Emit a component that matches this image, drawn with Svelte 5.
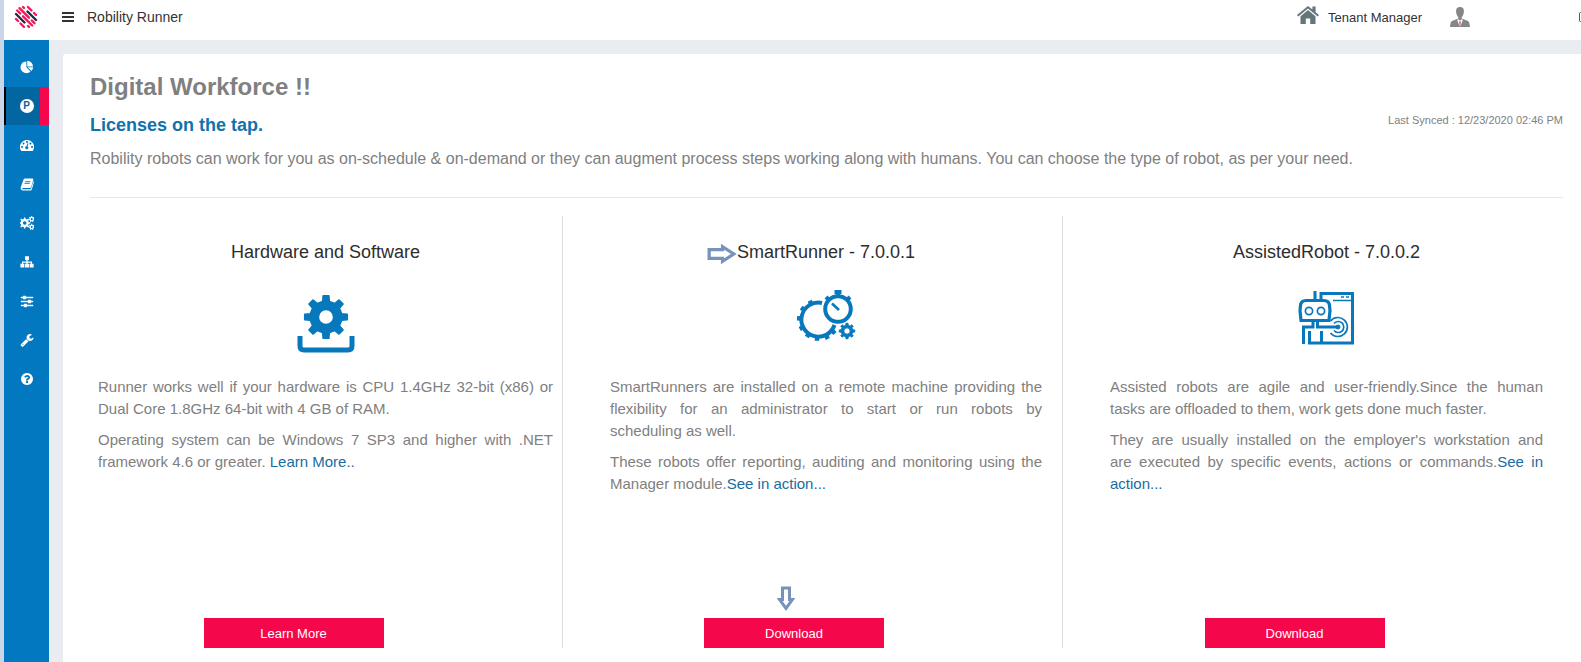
<script lang="ts">
  type Part = { text: string; link?: boolean }
  type Runner = {
    title: string
    icon: string
    action: string
    marked?: boolean
    paragraphs: Part[][]
  }

  const menu = ["Dashboard", "Packages", "Monitor", "Library", "Processes", "Hierarchy", "Settings", "Tools", "Help"]
  let active = $state("Packages")

  const runners: Runner[] = [
    {
      title: "Hardware and Software",
      icon: "hardware",
      action: "Learn More",
      paragraphs: [
        [{ text: "Runner works well if your hardware is CPU 1.4GHz 32-bit (x86) or Dual Core 1.8GHz 64-bit with 4 GB of RAM." }],
        [
          { text: "Operating system can be Windows 7 SP3 and higher with .NET framework 4.6 or greater. " },
          { text: "Learn More..", link: true },
        ],
      ],
    },
    {
      title: "SmartRunner - 7.0.0.1",
      icon: "smart",
      action: "Download",
      marked: true,
      paragraphs: [
        [{ text: "SmartRunners are installed on a remote machine providing the flexibility for an administrator to start or run robots by scheduling\u00a0as well." }],
        [
          { text: "These robots offer reporting, auditing and monitoring using the Manager module." },
          { text: "See in action...", link: true },
        ],
      ],
    },
    {
      title: "AssistedRobot - 7.0.0.2",
      icon: "assisted",
      action: "Download",
      paragraphs: [
        [{ text: "Assisted robots are agile and user-friendly.Since the human tasks are offloaded to them, work gets done much faster." }],
        [
          { text: "They are usually installed on the employer's workstation and are\u00a0executed by specific events, actions or commands." },
          { text: "See in action...", link: true },
        ],
      ],
    },
  ]

  // Outline of a gear: body radius r, teeth up to radius R, round hole
  function gear(cx: number, cy: number, r: number, R: number, teeth: number, hole: number) {
    const step = (Math.PI * 2) / teeth
    const at = (rad: number, a: number) => `${(cx + rad * Math.sin(a)).toFixed(2)} ${(cy - rad * Math.cos(a)).toFixed(2)}`
    let d = ""
    for (let i = 0; i < teeth; i++) {
      const a = i * step
      d += `${i ? "L" : "M"}${at(r, a - step * 0.27)}L${at(R, a - step * 0.17)}L${at(R, a + step * 0.17)}L${at(r, a + step * 0.27)}`
    }
    return `${d}ZM${cx - hole} ${cy}a${hole} ${hole} 0 1 0 ${hole * 2} 0a${hole} ${hole} 0 1 0 ${-hole * 2} 0Z`
  }
</script>

<div class="app">
  <header>
    <svg class="logo" viewBox="0 0 24 24" fill="none" stroke-width="2.400" stroke-linecap="round">
      <path stroke="#ee1c55" d="M14 2l3.500 3.500M20 8l2 2M9 2l1 1M5.500 3.200l9.500 9.500M17.800 15.500l2.700 2.700M3.200 5.500l3 3M9 11.300l9.200 9.200M14 21l1 1M2 14l2 2M6.500 18.500l3.500 3.500" />
      <path stroke="#1c2b50" d="M13.500 6.500l8.500 8.500M2 9l8.500 8.500" />
    </svg>
    <button class="toggle" aria-label="Toggle menu">
      <svg viewBox="0 0 12 12" fill="#333"><path d="M0 1h12v2H0zM0 5h12v2H0zM0 9h12v2H0z" /></svg>
    </button>
    <span class="brand">Robility Runner</span>
    <a class="tenant" href="#tenant">
      <svg viewBox="0 0 22 18" fill="#66757b">
        <path d="M11 0 0 9l1.300 1.500L11 2.600l9.700 7.900L22 9l-3.400-2.800V.6h-3.200v3z" />
        <path d="M11 4 3.500 10.200V18h5.300v-5.500h4.400V18h5.300v-7.800z" />
      </svg>
      Tenant Manager
    </a>
    <button class="user" aria-label="Account">
      <svg viewBox="0 0 20 22">
        <path fill="#85868a" d="M10 1c2.900 0 4.200 2 3.900 4.800-.2 2.800-1.100 4.300-2.200 5.200v1.500l5.600 2.200c1.600.7 2.200 1.500 2.700 6.300H0c.5-4.800 1-5.600 2.700-6.300l5.600-2.200V11C7.200 10.100 6.300 8.600 6.100 5.800 5.800 3 7.100 1 10 1z" />
        <path fill="#fff" d="M8 13.200 10 14.500l2-1.300.8.800L10.500 20h-1L7.200 14z" />
        <path fill="#c98b74" d="m10 14.500 1 1.300-.6 5.200h-.8L9 15.800z" />
      </svg>
    </button>
    <button class="more" aria-label="Sign out">
      <svg viewBox="0 0 12 12" fill="none" stroke="#555"><path d="M7 1.500H2.500q-1 0-1 1v7q0 1 1 1H7" /></svg>
    </button>
  </header>

  <div class="body">
    <nav>
      {#each menu as item}
        <button class="item" class:active={active === item} aria-label={item} onclick={() => (active = item)}>
          {#if item === "Packages"}
            <span class="letter">P</span>
          {:else}
            <svg viewBox="0 0 1792 1792" fill="#fff">
              {#if item === "Dashboard"}
                <path d="M820 930V180A750 750 0 1 0 1350 1460z" />
                <path d="M930 820V100a760 760 0 0 1 740 720zM980 930h700a760 760 0 0 1-210 490z" />
              {:else if item === "Monitor"}
                <path fill-rule="evenodd" d="M896 256a896 896 0 0 1 760 1370q-19 38-60 38H196q-41 0-60-38A896 896 0 0 1 896 256zM256 1024a120 120 0 1 0 1 0zM450 580a120 120 0 1 0 1 0zM896 380a120 120 0 1 0 1 0zM1340 580a120 120 0 1 0 1 0zM1536 1024a120 120 0 1 0 1 0zM960 1085l110-390-120-35-110 400a190 190 0 1 0 120 25z" />
              {:else if item === "Library"}
                <path fill-rule="evenodd" d="M640 200h950q150 30 110 180l-280 930q-30 100-140 110H360q-110 0-80 90 20 50 90 50h950q60 0 90-60l320-960q80 50 50 160l-270 890q-50 130-170 130H330Q120 1700 80 1450q-10-90 30-170L430 370q60-160 210-170zM680 500l-35 110h680l35-110zM600 740l-35 110h680l35-110z" />
              {:else if item === "Processes"}
                <path fill-rule="evenodd" d={gear(600, 896, 530, 720, 8, 230)} />
                <path fill-rule="evenodd" d={gear(1500, 400, 290, 410, 7, 130)} />
                <path fill-rule="evenodd" d={gear(1500, 1400, 290, 410, 7, 130)} />
              {:else if item === "Hierarchy"}
                <path d="M640 160h510v480H980v190h560v290h200v480h-510v-480h150V980H980v140h170v480H640v-480h170V980H410v140h150v480H50v-480h200V830h560V640H640z" />
              {:else if item === "Settings"}
                <path stroke="#fff" stroke-width="60" d="M480 1408v128H128v-128h352zm352-128q26 0 45 19t19 45v256q0 26-19 45t-45 19H576q-26 0-45-19t-19-45v-256q0-26 19-45t45-19h256zm160-384v128H128V896h864zM352 384v128H128V384h224zm1312 1024v128H928v-128h736zM704 256q26 0 45 19t19 45v256q0 26-19 45t-45 19H448q-26 0-45-19t-19-45V320q0-26 19-45t45-19h256zm640 512q26 0 45 19t19 45v256q0 26-19 45t-45 19h-256q-26 0-45-19t-19-45V832q0-26 19-45t45-19h256zm320 128v128h-224V896h224zm0-512v128H800V384h864z" />
              {:else if item === "Tools"}
                <path d="M448 1472q0-26-19-45t-45-19-45 19-19 45 19 45 45 19 45-19 19-45zm644-420l-682 682q-37 37-90 37-52 0-91-37l-106-108q-38-36-38-90 0-53 38-91l681-681q39 98 114.500 173.500t173.500 114.500zm634-435q0 39-23 106-47 134-164.500 217.500t-258.500 83.500q-185 0-316.500-131.500t-131.500-316.500 131.500-316.500 316.500-131.500q58 0 121.500 16.500t107.500 46.500q16 11 16 28t-16 28l-293 169v224l193 107q5-3 79-48.500t135.500-81 70.500-35.500q15 0 23.500 10t8.500 25z" />
              {:else}
                <path d="M1024 1376v-192q0-14-9-23t-23-9h-192q-14 0-23 9t-9 23v192q0 14 9 23t23 9h192q14 0 23-9t9-23zm256-672q0-88-55.500-163t-138.500-116-170-41q-243 0-371 213-15 24 8 42l132 100q7 6 19 6 16 0 25-12 53-68 86-92 34-24 86-24 48 0 85.500 26t37.500 59q0 38-20 61t-68 45q-63 28-115.500 86.500t-52.500 125.500v36q0 14 9 23t23 9h192q14 0 23-9t9-23q0-19 21.500-49.500t54.500-49.500q32-18 49-28.500t46-35 44.500-48 28-60.500 12.500-81zm384 192q0 209-103 385.500t-279.500 279.500-385.500 103-385.500-103-279.500-279.500-103-385.500 103-385.500 279.500-279.500 385.500-103 385.500 103 279.500 279.500 103 385.500z" />
              {/if}
            </svg>
          {/if}
        </button>
      {/each}
    </nav>

    <main>
      <div class="intro">
        <h1>Digital Workforce !!</h1>
        <div class="row">
          <h2>Licenses on the tap.</h2>
          <span class="synced">Last Synced : 12/23/2020 02:46 PM</span>
        </div>
        <p>Robility robots can work for you as on-schedule &amp; on-demand or they can augment process steps working along with humans. You can choose the type of robot, as per your need.</p>
      </div>

      <div class="runners">
        {#each runners as runner}
          <section>
            <h3>
              <span class="title">
                {#if runner.marked}
                  <svg class="arrow-right" viewBox="0 0 28 18" fill="#fff" stroke="#7793bb" stroke-width="3">
                    <path d="M2 5h12.500V2.200L25 9l-10.500 6.800V13H2z" />
                  </svg>
                {/if}
                {runner.title}
              </span>
            </h3>

            <svg class="picture" viewBox="0 0 64 64" fill="none" stroke="#0878bd">
              {#if runner.icon === "hardware"}
                <path fill="#0878bd" fill-rule="evenodd" stroke-width="1.500" stroke-linejoin="round" d={gear(32, 27, 16, 21.500, 8, 7.600)} />
                <path stroke-width="5" stroke-linejoin="round" d="M6 46v10q0 4 4 4h44q4 0 4-4V46" />
              {:else if runner.icon === "smart"}
                <path stroke-width="4" d="M28 13A17 17 0 1 0 40.500 35" />
                <path stroke-width="4.500" d="M17.500 14.500l-1.800-3.800M10.500 20l-3.400-2.400M7.500 28.500l-4.500-.3M9.500 37l-3.800 2M15 43.500l-2.200 3.500M23 46.500v4.200M32 45l1.800 4M38 40.500l3 3" />
                <circle cx="44" cy="19" r="12.800" stroke-width="4" />
                <path stroke-width="4" d="M40.500 2h7M44 2v5M32 7l3 3M56 7l-3 3" />
                <path stroke-width="2.500" d="M38 13.500l7 6.500" />
                <path fill="#0878bd" stroke-width="1" fill-rule="evenodd" d={gear(53, 41, 5.800, 7.800, 8, 3.200)} />
              {:else}
                <path stroke-width="3" d="M26 10V3.500h31.500V53H14.500V41" />
                <path stroke-width="1.500" d="M38 10.500h19M46 7h3M51 7h3" />
                <path fill="#fff" stroke-width="3.200" d="M11 10.500h18q5 0 5.500 5l.5 5-1 10H6L5 20.500l.5-5q.5-5 5.500-5z" />
                <path stroke-width="3" d="M20 1v9M26.500 41v12M8.500 54V37H18v-6" />
                <path stroke-width="3" d="M22.500 31v6H43" />
                <circle cx="14" cy="21" r="3.600" stroke-width="1.700" />
                <circle cx="26" cy="21" r="3.600" stroke-width="1.700" />
                <circle cx="43" cy="37" r="2" fill="#0878bd" />
                <path stroke-width="1.700" d="M39 33.500a5.500 5.500 0 1 1 0 7M35.500 31a9.500 9.500 0 1 1 0 12" />
              {/if}
            </svg>

            <div class="text">
              {#each runner.paragraphs as paragraph}
                <p>
                  {#each paragraph as part}{#if part.link}<a href="#more">{part.text}</a>{:else}{part.text}{/if}{/each}
                </p>
              {/each}
            </div>

            <div class="action">
              {#if runner.marked}
                <svg class="arrow-down" viewBox="0 0 18 26" fill="#fff" stroke="#7793bb" stroke-width="3">
                  <path d="M5.500 2h7v11.500h3L9 22.500 2.500 13.500h3z" />
                </svg>
              {/if}
              <button>{runner.action}</button>
            </div>
          </section>
        {/each}
      </div>
    </main>
  </div>
</div>

<style>
  :global(body) {
    background: #e9edf2;
    font-family: "Liberation Sans", Arial, sans-serif;
    color: #808080;
  }

  .app {
    display: flex;
    flex-direction: column;
    min-height: 100vh;
    box-sizing: border-box;
    border-left: 4px solid #c9d6ea;
    overflow: hidden;
  }

  button {
    padding: 0;
    border: 0;
    background: none;
    font-family: inherit;
    cursor: pointer;
  }

  svg {
    display: block;
  }

  a {
    color: #1a6c9f;
    text-decoration: none;
  }

  header {
    display: flex;
    align-items: center;
    height: 40px;
    padding: 0 0 6px 10px;
    box-sizing: border-box;
    background: #fff;
    color: #333;
  }

  .logo {
    width: 24px;
    height: 24px;
  }

  .toggle {
    margin: 0 13px 0 24px;
  }

  .toggle svg, .more svg {
    width: 12px;
    height: 12px;
  }

  .brand {
    font-size: 14px;
  }

  .tenant {
    display: flex;
    align-items: center;
    gap: 9px;
    margin-left: auto;
    font-size: 13px;
    color: #333;
  }

  .tenant svg {
    width: 22px;
    height: 18px;
    margin-bottom: 4px;
  }

  .user {
    margin: 0 108px 0 28px;
  }

  .user svg {
    width: 20px;
    height: 22px;
  }

  .more {
    margin-right: -9px;
  }

  .body {
    display: flex;
    flex: 1;
  }

  nav {
    flex: none;
    width: 45px;
    padding-top: 8px;
    box-sizing: border-box;
    background: #0178bf;
  }

  .item {
    display: flex;
    align-items: center;
    justify-content: center;
    width: 100%;
    height: 38px;
    margin-bottom: 1px;
  }

  .item svg {
    width: 14px;
    height: 14px;
  }

  .item.active {
    border-left: 2px solid #000;
    border-right: 9px solid #f5084b;
    padding-left: 7px;
    background: #0466a0;
  }

  .letter {
    width: 14px;
    border-radius: 50%;
    background: #fff;
    color: #0466a0;
    font-size: 10px;
    font-weight: bold;
    line-height: 14px;
  }

  main {
    display: flex;
    flex: 1;
    flex-direction: column;
    margin: 14px 0 0 14px;
    padding: 18px 18px 14px 27px;
    border-radius: 3px 0 0 0;
    background: #fff;
  }

  .intro {
    padding-bottom: 27px;
    border-bottom: 1px solid #e8e8e8;
  }

  h1, h2, h3, p {
    margin: 0;
  }

  h1 {
    font-size: 24px;
    line-height: 30px;
  }

  .row {
    display: flex;
    align-items: flex-start;
    justify-content: space-between;
    margin: 12px 0;
  }

  h2 {
    font-size: 18px;
    line-height: 22px;
    color: #1272ab;
  }

  .synced {
    font-size: 11px;
    line-height: 12px;
  }

  .intro p {
    font-size: 16px;
    line-height: 22px;
  }

  .runners {
    display: grid;
    flex: 1;
    grid-template-columns: 473fr 500fr 500fr;
    margin-top: 18px;
  }

  section {
    display: flex;
    flex-direction: column;
    align-items: center;
    padding: 24px 20px 0 47px;
    border-right: 1px solid #dcdcdc;
  }

  section:first-child {
    padding: 24px 9px 0 8px;
  }

  section:last-child {
    border-right: 0;
  }

  h3 {
    font-size: 18px;
    font-weight: normal;
    line-height: 24px;
    color: #2d2d2d;
  }

  .title {
    position: relative;
  }

  .arrow-right {
    position: absolute;
    top: 2px;
    right: 100%;
    width: 30px;
    height: 20px;
  }

  .picture {
    width: 64px;
    height: 64px;
    margin: 26px 0 22px;
  }

  .text {
    width: 100%;
    font-size: 15px;
    line-height: 22px;
    text-align: justify;
  }

  .text p {
    margin-bottom: 9px;
  }

  .action {
    position: relative;
    margin: auto 64px 0 0;
  }

  .action button {
    width: 180px;
    height: 30px;
    background: #f5084b;
    color: #fff;
    font-size: 13px;
  }

  .arrow-down {
    position: absolute;
    bottom: 36px;
    left: 73px;
    width: 18px;
    height: 26px;
  }
</style>
